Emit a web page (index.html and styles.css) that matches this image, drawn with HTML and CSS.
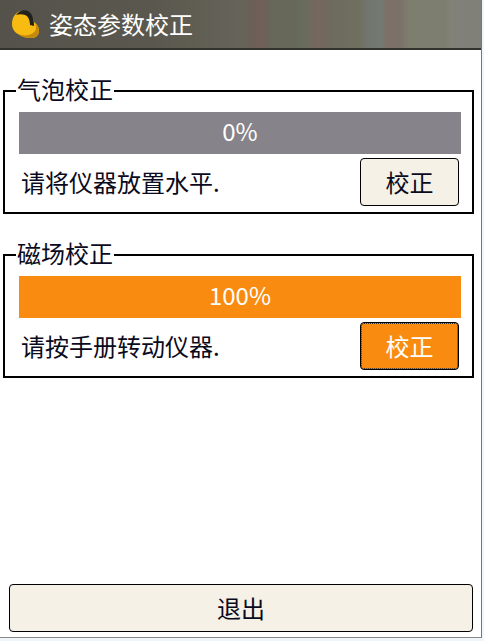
FILE: index.html
```html
<!DOCTYPE html>
<html>
<head>
    <meta charset="UTF-8">
    <title>姿态参数校正</title>
    <link rel="stylesheet" href="styles.css">
</head>
<body>

<div class="window">
    <div class="title-bar">
        <svg class="title-icon" width="30" height="32" viewBox="0 0 30 32">
            <path d="M2 16 C2 9 6 3 13 3 C19 3 23 8 24 14 C27 16 29 19 29 23 C29 27 26 30 22 30 C17 30 12 29 8 26 C4 24 2 20 2 16 Z" fill="#f8bb12"/>
            <path d="M8 26 C13 28 19 28 23 25 C26 23 27 20 25 15 C27 16 29 19 29 23 C29 27 26 30 22 30 C17 30 12 29 8 26 Z" fill="#c48a0c"/>
            <path d="M6 7 C9 3 14 1 18 3 C22 5 24 11 24 18 L20 17 C20 12 18 8 15 7 C12 6 9 6 6 7 Z" fill="#23211c"/>
        </svg>
        <span class="title-text">姿态参数校正</span>
    </div>

    <div class="content">
        <fieldset class="group">
            <legend>气泡校正</legend>
            <div class="progress">0%</div>
            <div class="row">
                <span class="hint">请将仪器放置水平.</span>
                <button class="btn calib-btn">校正</button>
            </div>
        </fieldset>

        <fieldset class="group">
            <legend>磁场校正</legend>
            <div class="progress done">100%</div>
            <div class="row">
                <span class="hint">请按手册转动仪器.</span>
                <button class="btn calib-btn active">校正</button>
            </div>
        </fieldset>

        <button class="btn exit-btn">退出</button>
    </div>
</div>

</body>
</html>
```

FILE: styles.css
```css
html, body {
    margin: 0;
    padding: 0;
    height: 100%;
    overflow: hidden;
    background-color: #eef6fb;
}

body {
    font-family: "Noto Sans CJK SC", "Liberation Sans", sans-serif;
}

.window {
    box-sizing: border-box;
    width: 482px;
    height: 638px;
    display: flex;
    flex-direction: column;
    background-color: white;
    border-right: 1px solid #777;
    border-bottom: 1px solid #888;
}

.title-bar {
    box-sizing: border-box;
    height: 50px;
    flex-shrink: 0;
    display: flex;
    align-items: center;
    padding-left: 10px;
    border-bottom: 2px solid #33322d;
    background: linear-gradient(to right,
        #54524a 0, #5a584e 150px, #5f5d52 190px, #66645a 240px,
        #6a6058 252px, #725f58 262px, #66665a 270px, #68685a 295px,
        #666c5e 302px, #77675f 318px, #6f6a5f 330px, #70705f 360px,
        #727670 368px, #747a72 382px, #7d7068 386px, #7a7268 400px,
        #7e7e6e 410px, #7d7d70 445px, #818178 450px, #80807a 480px);
}

.title-icon {
    flex-shrink: 0;
}

.title-text {
    margin-left: 9px;
    font-size: 24px;
    line-height: 32px;
    color: white;
}

.content {
    flex: 1;
    display: flex;
    flex-direction: column;
    padding: 28px 8px 0 3px;
}

.group {
    box-sizing: border-box;
    width: 470px;
    height: 136px;
    margin: 0 0 28px 0;
    padding: 0 11px 0 14px;
    border: 2px solid black;
}

.group legend {
    margin-left: -3px;
    padding: 0 1px 4px 1px;
    font-size: 24px;
    line-height: 22px;
    color: #0a0a20;
}

.progress {
    width: 442px;
    height: 42px;
    margin-top: 8px;
    line-height: 38px;
    text-align: center;
    font-size: 24px;
    color: white;
    background-color: #86838a;
}

.progress.done {
    background-color: #f98c10;
}

.row {
    display: flex;
    justify-content: space-between;
    align-items: center;
    margin-top: 4px;
    padding-left: 2px;
    width: 438px;
}

.hint {
    font-size: 24px;
    line-height: 48px;
    color: #0a0a20;
}

.btn {
    box-sizing: border-box;
    padding: 0 0 2px 0;
    font-family: inherit;
    font-size: 24px;
    color: #0a0a20;
    background-color: #f5f1e6;
    border: 1px solid black;
    border-radius: 4px;
}

.calib-btn {
    width: 99px;
    height: 48px;
}

.calib-btn.active {
    color: white;
    background-color: #f98c10;
    outline: 1px dotted #333;
    outline-offset: -2px;
}

.exit-btn {
    width: 464px;
    height: 48px;
    margin-top: auto;
    margin-left: 6px;
    margin-bottom: 5px;
}
```
